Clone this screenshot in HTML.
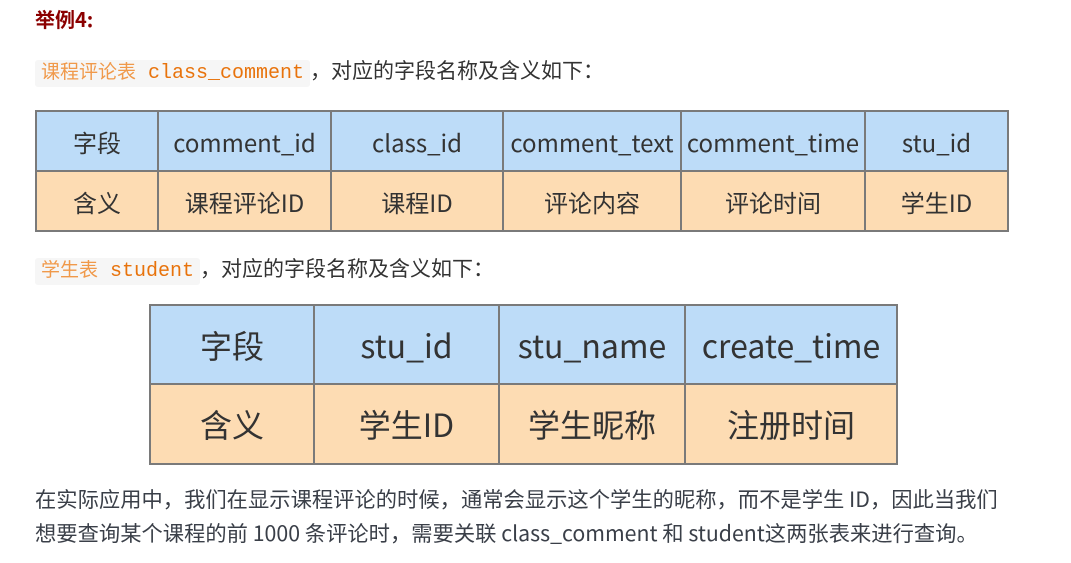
<!DOCTYPE html>
<html><head><meta charset="utf-8"><style>
body{margin:0;width:1071px;height:563px;background:#fff;position:relative;overflow:hidden;font-family:"Noto Sans CJK SC","Liberation Sans",sans-serif;color:#333}
.a{position:absolute;white-space:nowrap}
.code{background:#f6f6f6;border-radius:3px;color:#e8730c;font-family:"Liberation Mono","Noto Sans CJK SC",monospace;padding:2px 6px;font-size:20px}
.code .c{color:#f0994a;font-family:"Noto Sans CJK SC",sans-serif;font-size:19px}
table{position:absolute;border-collapse:collapse;font-family:"Noto Sans CJK SC","Liberation Sans",sans-serif;color:#333}
td{border:2px solid #7a7a7a;text-align:center;padding:0;white-space:nowrap}
tr.h td{background:#bddcf8}
tr.b td{background:#fddcb3}
</style></head><body>
<div class="a" style="left:35px;top:4px;font-size:20px;font-weight:bold;color:#8b0000">举例4:</div>
<div class="a" style="left:35px;top:54px;font-size:20px;line-height:32px"><span class="code"><span class="c">课程评论表</span> class_comment</span><span style="font-size:21px">，对应的字段名称及含义如下：</span></div>
<table style="left:35px;top:110px;width:974px;font-size:24px">
<tr class="h" style="height:60px"><td style="width:120px">字段</td><td style="width:171px">comment_id</td><td style="width:170px">class_id</td><td style="width:176px">comment_text</td><td style="width:182px">comment_time</td><td>stu_id</td></tr>
<tr class="b" style="height:60px"><td>含义</td><td>课程评论ID</td><td>课程ID</td><td>评论内容</td><td>评论时间</td><td>学生ID</td></tr>
</table>
<div class="a" style="left:35px;top:252px;font-size:20px;line-height:32px"><span class="code"><span class="c">学生表</span> student</span><span style="font-size:21px">，对应的字段名称及含义如下：</span></div>
<table style="left:149px;top:304px;width:749px;font-size:32px">
<tr class="h" style="height:79px"><td style="width:162px">字段</td><td style="width:183px">stu_id</td><td style="width:184px">stu_name</td><td>create_time</td></tr>
<tr class="b" style="height:80px"><td>含义</td><td>学生ID</td><td>学生昵称</td><td>注册时间</td></tr>
</table>
<div class="a" style="left:35px;top:482px;font-size:21.3px;line-height:34px;color:#3a3f48">在实际应用中，我们在显示课程评论的时候，通常会显示这个学生的昵称，而不是学生 ID，因此当我们<br>想要查询某个课程的前 1000 条评论时，需要关联 class_comment 和 student这两张表来进行查询。</div>
</body></html>
